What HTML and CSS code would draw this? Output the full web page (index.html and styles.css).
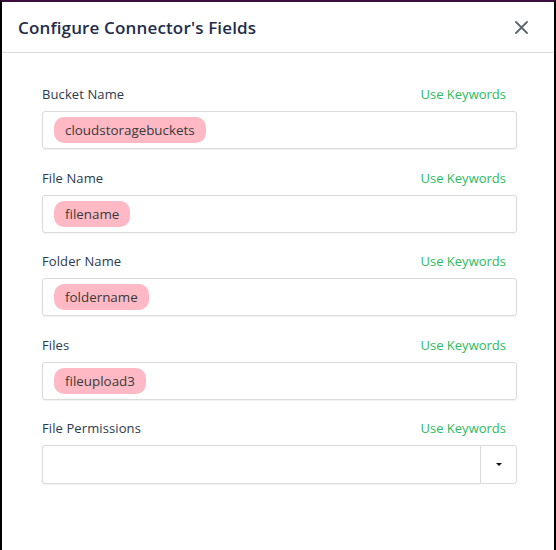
FILE: index.html
```html
<!DOCTYPE html>
<html>
<head>
<meta charset="utf-8">
<link rel="stylesheet" href="styles.css">
</head>
<body>
<div class="frame">
  <header class="header">
    <h1 class="title">Configure Connector's Fields</h1>
    <button class="close" aria-label="Close">
      <svg width="13" height="13" viewBox="0 0 13 13"><path d="M1 1 L12 12 M12 1 L1 12" stroke="#5f6670" stroke-width="1.8" stroke-linecap="round" fill="none"/></svg>
    </button>
  </header>
  <main class="content">
    <div class="field">
      <div class="label-row"><span class="label">Bucket Name</span><span class="kw">Use Keywords</span></div>
      <div class="input"><span class="chip">cloudstoragebuckets</span></div>
    </div>
    <div class="field">
      <div class="label-row"><span class="label">File Name</span><span class="kw">Use Keywords</span></div>
      <div class="input"><span class="chip">filename</span></div>
    </div>
    <div class="field">
      <div class="label-row"><span class="label">Folder Name</span><span class="kw">Use Keywords</span></div>
      <div class="input"><span class="chip">foldername</span></div>
    </div>
    <div class="field">
      <div class="label-row"><span class="label">Files</span><span class="kw">Use Keywords</span></div>
      <div class="input"><span class="chip">fileupload3</span></div>
    </div>
    <div class="field">
      <div class="label-row"><span class="label">File Permissions</span><span class="kw">Use Keywords</span></div>
      <div class="select">
        <div class="select-input"></div>
        <div class="select-btn"><span class="caret"></span></div>
      </div>
    </div>
  </main>
</div>
</body>
</html>
```
FILE: styles.css
```css
* { box-sizing: border-box; }
html, body { margin: 0; padding: 0; background: #fff; }
body { font-family: "Open Sans", "Noto Sans", sans-serif; }
.frame {
  width: 556px;
  height: 550px;
  border-top: 2px solid #3a0d3a;
  border-left: 2px solid #000;
  border-right: 2px solid #000;
  background: #fff;
  display: flex;
  flex-direction: column;
}
.header {
  height: 51px;
  border-bottom: 1px solid #dcdcdc;
  display: flex;
  align-items: center;
  justify-content: space-between;
  padding: 0 26px 0 16px;
}
.title {
  margin: 0;
  font-size: 17px;
  font-weight: 600;
  color: #1f2d4b;
  letter-spacing: 0.15px;
}
.close {
  border: 0;
  background: none;
  padding: 0;
  width: 13px;
  height: 13px;
  display: flex;
}
.content {
  padding: 32px 37px 0 40px;
  display: flex;
  flex-direction: column;
  gap: 19.5px;
}
.label-row {
  height: 18px;
  line-height: 18px;
  display: flex;
  justify-content: space-between;
  padding-right: 11px;
  margin-bottom: 8px;
  font-size: 13px;
}
.label { color: #2c3a4b; letter-spacing: 0.1px; }
.kw { color: #2dbb5d; }
.input {
  height: 38px;
  border: 1px solid #dadada;
  border-radius: 3px;
  box-shadow: 0 1px 2px rgba(0,0,0,0.06);
  padding: 5px 11px;
  display: flex;
  align-items: center;
}
.chip {
  background: #ffb9c4;
  color: #3a3a3a;
  border-radius: 10px;
  height: 26px;
  line-height: 26px;
  padding: 0 11px;
  font-size: 13.4px;
}
.select {
  display: flex;
  height: 39px;
}
.select-input {
  flex: 1;
  border: 1px solid #dadada;
  border-right: 0;
  border-radius: 3px 0 0 3px;
  box-shadow: 0 1px 2px rgba(0,0,0,0.06);
}
.select-btn {
  width: 37px;
  border: 1px solid #dadada;
  border-radius: 0 3px 3px 0;
  display: flex;
  align-items: center;
  justify-content: center;
}
.caret {
  width: 0;
  height: 0;
  border-left: 3px solid transparent;
  border-right: 3px solid transparent;
  border-top: 3px solid #111;
}
```
